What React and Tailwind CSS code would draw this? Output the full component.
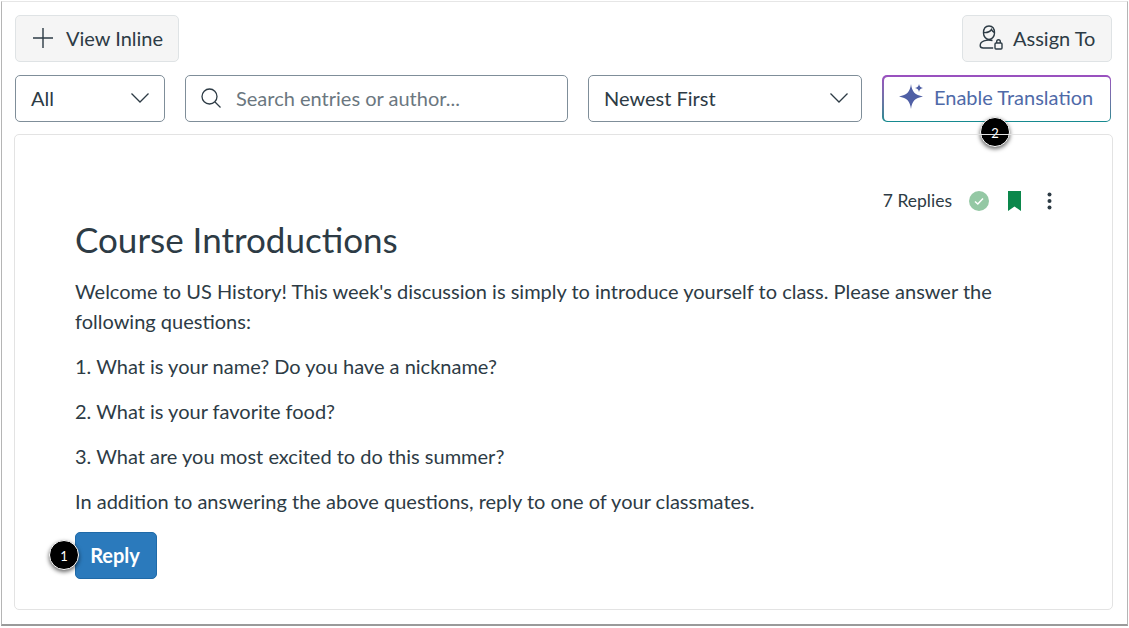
const PARAGRAPHS = [
  '1. What is your name? Do you have a nickname?',
  '2. What is your favorite food?',
  '3. What are you most excited to do this summer?',
  'In addition to answering the above questions, reply to one of your classmates.',
];

function Badge({ children, className }) {
  return (
    <div className={`absolute w-[30px] h-[30px] rounded-full bg-black border-[1.5px] border-white text-white text-[13px] leading-none pt-[3px] flex items-center justify-center shadow-[0_2px_4px_rgba(0,0,0,0.6)] ${className}`}>
      {children}
    </div>
  );
}

function Chevron() {
  return (
    <svg width="18" height="10" viewBox="0 0 18 10" fill="none" stroke="#2d3b45" strokeWidth="1.3">
      <path d="M.5.5 9 9l8.500-8.500" />
    </svg>
  );
}

function AssignIcon() {
  return (
    <svg width="24" height="25" viewBox="0 0 24 25" fill="none" stroke="#2d3b45" strokeWidth="1.4">
      <path d="M4.500 8c0-4.500 2.200-7 5.500-7s5.500 2.500 5.500 7c0 3.500-2.500 6.500-5.500 6.500S4.500 11.500 4.500 8z" />
      <path d="M4.500 7.500c3 .3 6.500-.7 8-3 .5 1.300 1.500 2.300 3 3" />
      <path d="M13.500 15.500c-1.500-.3-6-.5-8.500.3C2.500 16.700 1.200 18.500 1.200 20.500c0 1.500 1 2.500 3 2.500h10" />
      <rect x="16" y="18" width="7" height="6" rx="1" />
      <path d="M17.700 18v-1.500a1.800 1.800 0 0 1 3.600 0V18" />
    </svg>
  );
}

export default function App() {
  return (
    <div className="w-[1129px] h-[628px] bg-white pt-px pb-[2px] pr-[1px] font-['Lato',sans-serif] text-[#2d3b45]">
      <div className="h-full w-[1127px] ml-px border-l border-l-[#b5b5b5] border-t border-t-[#e6e6e6] border-b-2 border-b-[#9a9a9a] border-r border-r-[#b5b5b5] pl-3 pr-[13px] pt-[13px]">
        <div className="flex justify-between items-center h-[47px] pl-px pr-[2px]">
          <button className="h-[47px] w-[164px] flex items-center gap-[13px] pl-[17px] pb-[2px] bg-[#f5f5f5] border border-[#dfe3e5] rounded-[5px] text-[20px]">
            <svg width="20" height="20" viewBox="0 0 20 20" stroke="#2d3b45" strokeWidth="1.4">
              <path d="M10 0v20M0 10h20" />
            </svg>
            View Inline
          </button>
          <button className="h-[47px] w-[150px] flex items-center gap-[10px] pl-[16px] pb-[2px] bg-[#f5f5f5] border border-[#dfe3e5] rounded-[5px] text-[20px]">
            <AssignIcon />
            Assign To
          </button>
        </div>

        <div className="flex items-center h-[47px] mt-[13px] pl-px relative">
          <div className="w-[150px] h-[47px] flex items-center justify-between pl-[15px] pr-[15px] pb-[2px] border border-[#7f8e99] rounded-[5px] text-[20px]">
            All
            <Chevron />
          </div>
          <div className="w-[383px] h-[47px] ml-5 flex items-center gap-[15px] pl-[15px] pb-[2px] border border-[#7f8e99] rounded-[5px] text-[20px] text-[#6b7780]">
            <svg width="20" height="20" viewBox="0 0 20 20" fill="none" stroke="#2d3b45" strokeWidth="1.3">
              <circle cx="8.500" cy="8.500" r="7.500" />
              <path d="M14 14l5.500 5.500" />
            </svg>
            Search entries or author...
          </div>
          <div className="w-[274px] h-[47px] ml-5 flex items-center justify-between pl-[15px] pr-[13px] pb-[2px] border border-[#7f8e99] rounded-[5px] text-[20px]">
            Newest First
            <Chevron />
          </div>
          <div className="w-[229px] h-[47px] ml-5 rounded-[5px] p-[1.5px] bg-gradient-to-b from-[#9b4fc0] to-[#0f8a8f]">
            <div className="w-full h-full bg-white rounded-[4px] flex items-center gap-[9px] pl-[13.5px] pb-[3px] text-[20px] text-[#4f6aa8]">
              <svg width="28" height="28" viewBox="0 0 28 28" fill="#4f5fa5">
                <path d="M14 1c1 8 4 11 12 12.500-8 1.500-11 4.500-12 12.500-1-8-4-11-12-12.500C10 12 13 9 14 1z" />
                <path d="M22 1q.5 3.500 4 4-3.500.5-4 4-.5-3.500-4-4 3.500-.5 4-4z" />
              </svg>
              Enable Translation
            </div>
          </div>
          <Badge className="left-[966px] top-[42px]">2</Badge>
        </div>

        <div className="mt-3 w-[1099px] h-[476px] border border-[#e3e3e3] rounded-[5px] pl-[60px] pr-[56px] pt-[53px] relative">
          <div className="flex justify-end items-center h-6 text-[17.500px] pt-[2px]">
            <span>7 Replies</span>
            <span className="ml-[17px] w-[20px] h-[20px] rounded-full bg-[#94c8a4] flex items-center justify-center">
              <svg width="12" height="12" viewBox="0 0 12 12" fill="none" stroke="white" strokeWidth="1.5"><path d="M2 6.500l2.800 2.500 5.200-5.500" /></svg>
            </span>
            <svg className="ml-[19px]" width="13" height="20" viewBox="0 0 13 20" fill="#0b874b"><path d="M0 0h13v20l-6.500-4.500L0 20z" /></svg>
            <svg className="ml-[26px] mr-[4px]" width="5" height="18" viewBox="0 0 5 18" fill="#2d3b45">
              <circle cx="2.500" cy="2.500" r="2" />
              <circle cx="2.500" cy="9" r="2" />
              <circle cx="2.500" cy="15.500" r="2" />
            </svg>
          </div>
          <h1 className="text-[35px] leading-[44px] mt-[5px]">Course Introductions</h1>
          <p className="text-[20px] leading-[30px] mt-[15px]">
            Welcome to US History! This week's discussion is simply to introduce yourself to class. Please answer the following questions:
          </p>
          {PARAGRAPHS.map((text) => (
            <p key={text} className="text-[20px] leading-[30px] mt-[15px]">{text}</p>
          ))}
          <button className="mt-[16px] w-[82px] h-[47px] pb-[2px] pr-[2px] bg-[#2b7abc] text-white text-[20px] font-bold rounded-[5px] border border-[#1f6aa8]">
            Reply
          </button>
          <Badge className="left-[34px] top-[405px]">1</Badge>
        </div>
      </div>
    </div>
  );
}
